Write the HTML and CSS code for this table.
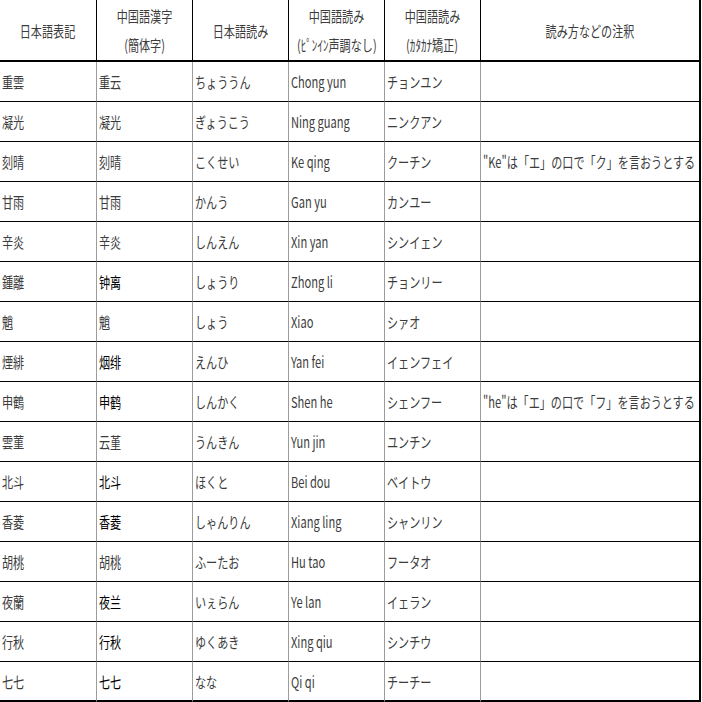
FILE: index.html
```html
<!DOCTYPE html>
<html lang="ja">
<head>
<meta charset="utf-8">
<link rel="stylesheet" href="styles.css">
</head>
<body>
<div class="sheet">
  <div class="h"><span>日本語表記</span></div>
  <div class="h"><span>中国語漢字</span><span>(簡体字)</span></div>
  <div class="h"><span>日本語読み</span></div>
  <div class="h"><span>中国語読み</span><span>(ﾋﾟﾝｲﾝ声調なし)</span></div>
  <div class="h"><span>中国語読み</span><span>(ｶﾀｶﾅ矯正)</span></div>
  <div class="h last"><span>読み方などの注釈</span></div>

  <div class="c"><span>重雲</span></div><div class="c"><span>重云</span></div><div class="c"><span>ちょううん</span></div><div class="c"><span>Chong yun</span></div><div class="c"><span>チョンユン</span></div><div class="c last"></div>
  <div class="c"><span>凝光</span></div><div class="c"><span>凝光</span></div><div class="c"><span>ぎょうこう</span></div><div class="c"><span>Ning guang</span></div><div class="c"><span>ニンクアン</span></div><div class="c last"></div>
  <div class="c"><span>刻晴</span></div><div class="c"><span>刻晴</span></div><div class="c"><span>こくせい</span></div><div class="c"><span>Ke qing</span></div><div class="c"><span>クーチン</span></div><div class="c last"><span>"Ke"は「エ」の口で「ク」を言おうとする</span></div>
  <div class="c"><span>甘雨</span></div><div class="c"><span>甘雨</span></div><div class="c"><span>かんう</span></div><div class="c"><span>Gan yu</span></div><div class="c"><span>カンユー</span></div><div class="c last"></div>
  <div class="c"><span>辛炎</span></div><div class="c"><span>辛炎</span></div><div class="c"><span>しんえん</span></div><div class="c"><span>Xin yan</span></div><div class="c"><span>シンイェン</span></div><div class="c last"></div>
  <div class="c"><span>鍾離</span></div><div class="c zh"><span>钟离</span></div><div class="c"><span>しょうり</span></div><div class="c"><span>Zhong li</span></div><div class="c"><span>チョンリー</span></div><div class="c last"></div>
  <div class="c"><span>魈</span></div><div class="c"><span>魈</span></div><div class="c"><span>しょう</span></div><div class="c"><span>Xiao</span></div><div class="c"><span>シァオ</span></div><div class="c last"></div>
  <div class="c"><span>煙緋</span></div><div class="c zh"><span>烟绯</span></div><div class="c"><span>えんひ</span></div><div class="c"><span>Yan fei</span></div><div class="c"><span>イェンフェイ</span></div><div class="c last"></div>
  <div class="c"><span>申鶴</span></div><div class="c zh"><span>申鹤</span></div><div class="c"><span>しんかく</span></div><div class="c"><span>Shen he</span></div><div class="c"><span>シェンフー</span></div><div class="c last"><span>"he"は「エ」の口で「フ」を言おうとする</span></div>
  <div class="c"><span>雲菫</span></div><div class="c"><span>云堇</span></div><div class="c"><span>うんきん</span></div><div class="c"><span>Yun jin</span></div><div class="c"><span>ユンチン</span></div><div class="c last"></div>
  <div class="c"><span>北斗</span></div><div class="c zh"><span>北斗</span></div><div class="c"><span>ほくと</span></div><div class="c"><span>Bei dou</span></div><div class="c"><span>ベイトウ</span></div><div class="c last"></div>
  <div class="c"><span>香菱</span></div><div class="c zh"><span>香菱</span></div><div class="c"><span>しゃんりん</span></div><div class="c"><span>Xiang ling</span></div><div class="c"><span>シャンリン</span></div><div class="c last"></div>
  <div class="c"><span>胡桃</span></div><div class="c"><span>胡桃</span></div><div class="c"><span>ふーたお</span></div><div class="c"><span>Hu tao</span></div><div class="c"><span>フータオ</span></div><div class="c last"></div>
  <div class="c"><span>夜蘭</span></div><div class="c zh"><span>夜兰</span></div><div class="c"><span>いぇらん</span></div><div class="c"><span>Ye lan</span></div><div class="c"><span>イェラン</span></div><div class="c last"></div>
  <div class="c"><span>行秋</span></div><div class="c zh"><span>行秋</span></div><div class="c"><span>ゆくあき</span></div><div class="c"><span>Xing qiu</span></div><div class="c"><span>シンチウ</span></div><div class="c last"></div>
  <div class="c"><span>七七</span></div><div class="c zh"><span>七七</span></div><div class="c"><span>なな</span></div><div class="c"><span>Qi qi</span></div><div class="c"><span>チーチー</span></div><div class="c last"></div>
</div>
</body>
</html>
```

FILE: styles.css
```css
html, body {
  margin: 0;
  padding: 0;
  background: #ffffff;
}

.sheet {
  display: grid;
  grid-template-columns: 97px 96px 96px 96px 96px 220px;
  width: 701px;
  font-family: "Noto Sans CJK JP", "Noto Sans", sans-serif;
  font-size: 15px;
  color: #3c3c3c;
}

.h {
  box-sizing: border-box;
  height: 62px;
  border-right: 1px solid #000;
  border-bottom: 2px solid #000;
  display: flex;
  flex-direction: column;
  align-items: center;
  justify-content: center;
  gap: 8px;
  line-height: 21px;
}

.h span {
  display: inline-block;
  white-space: nowrap;
  transform: scaleX(0.74);
  transform-origin: center;
}

.c {
  box-sizing: border-box;
  height: 40px;
  border-right: 1px solid #9c9c9c;
  border-bottom: 1px solid #000;
  display: flex;
  align-items: center;
  padding-left: 2px;
}

.c span {
  display: inline-block;
  white-space: nowrap;
  transform: scaleX(0.74);
  transform-origin: left center;
}

.zh {
  color: #000;
  font-family: "Noto Sans CJK SC", "Noto Sans CJK JP", sans-serif;
  font-weight: 400;
}

.h.last, .c.last {
  border-right: 2px solid #000;
}

.sheet > .c:nth-last-child(-n+6) {
  border-bottom: 3px solid #000;
  height: 41px;
}
```
